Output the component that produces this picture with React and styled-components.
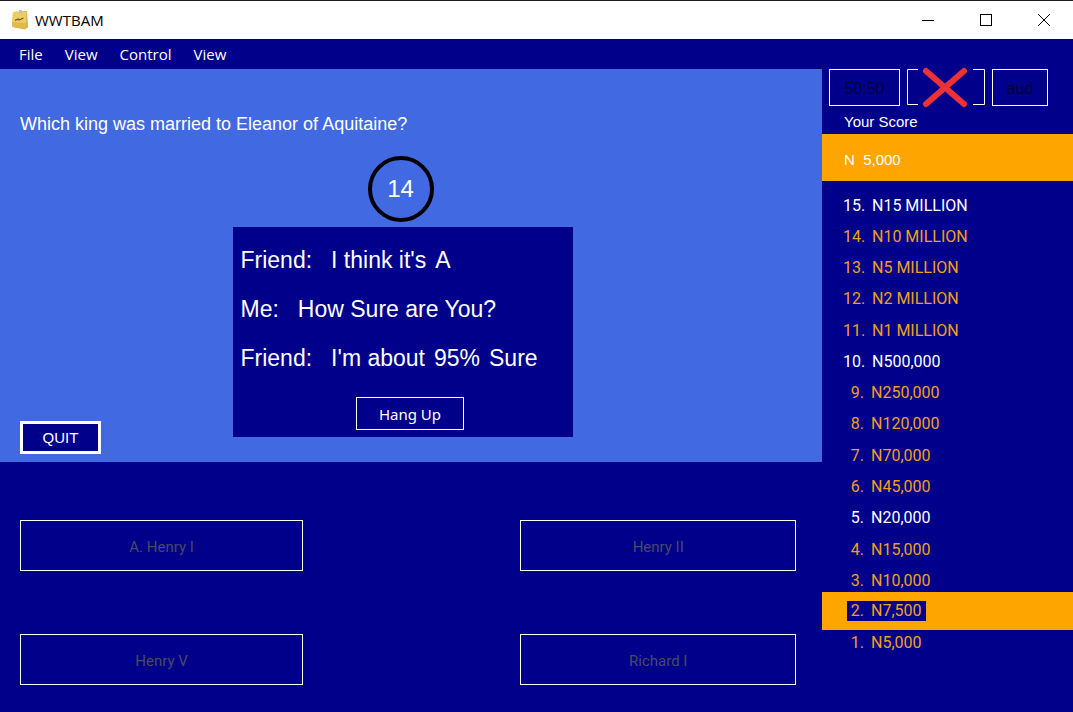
import React from "react";
import styled, { createGlobalStyle } from "styled-components";

const NAVY = "#00008b";
const ROYAL = "#4169e1";
const ORANGE = "#ffa500";

const GlobalStyle = createGlobalStyle`
  *, *::before, *::after { box-sizing: border-box; }
  body {
    margin: 0;
    background: ${NAVY};
    color: #fff;
    font-family: "Liberation Sans", Arial, sans-serif;
    font-size: 15px;
  }
  button { font: inherit; margin: 0; padding: 0; }
`;

const Window = styled.div`
  display: flex;
  flex-direction: column;
  min-height: 100vh;
`;

const TitleBar = styled.header`
  display: flex;
  align-items: center;
  height: 39px;
  padding-left: 11px;
  background: #fff;
  color: #000;
  border-top: 1px solid #231f20;
`;

const Title = styled.h1`
  flex: 1;
  margin: 0 0 0 6px;
  font: 400 15px/20px "Open Sans", "Noto Sans", sans-serif;
`;

const WindowButton = styled.button`
  display: grid;
  place-items: center;
  width: 58px;
  height: 38px;
  border: 0;
  background: none;
  color: #000;
`;

const Body = styled.div`
  display: flex;
  flex: 1;
`;

const Stage = styled.main`
  display: flex;
  flex: 1;
  flex-direction: column;
`;

const MenuBar = styled.nav`
  display: flex;
  gap: 22px;
  height: 30px;
  padding-left: 19px;
`;

const MenuItem = styled.button`
  border: 0;
  background: none;
  color: #fff;
  font: 400 15px/30px "Open Sans", "Noto Sans", sans-serif;
`;

const QuestionPanel = styled.section`
  position: relative;
  display: flex;
  flex-direction: column;
  align-items: center;
  height: 393px;
  padding: 45px 37px 0 20px;
  background: ${ROYAL};
`;

const Question = styled.h2`
  align-self: flex-start;
  margin: 0 0 22px;
  font-size: 18px;
  font-weight: 400;
  line-height: 20px;
`;

const Timer = styled.div`
  display: grid;
  place-items: center;
  width: 66px;
  height: 66px;
  margin: 0 4px 5px 0;
  border: 4px solid #000;
  border-radius: 50%;
  font-size: 24px;
`;

const CallDialog = styled.div`
  display: flex;
  flex-direction: column;
  width: 340px;
  height: 210px;
  padding: 19px 8px 7px;
  background: ${NAVY};
`;

const CallLine = styled.p`
  display: flex;
  margin: 0 0 21px;
  font-size: 23px;
  line-height: 28px;
`;

const Speaker = styled.span`
  margin-right: 19px;
`;

const Value = styled.span`
  margin: 0 9px;
`;

const OutlineButton = styled.button`
  border: ${(p) => (p.$thick ? 3 : 1)}px solid #fff;
  background: ${NAVY};
  color: #fff;
`;

const HangUpButton = styled(OutlineButton)`
  align-self: center;
  width: 108px;
  height: 33px;
  margin-left: 15px;
  margin-top: auto;
  font-family: "Noto Sans", "Open Sans", sans-serif;
`;

const QuitButton = styled(OutlineButton)`
  position: absolute;
  left: 20px;
  bottom: 8px;
  width: 81px;
  height: 33px;
`;

const Answers = styled.section`
  display: grid;
  grid-template-columns: 37fr 36fr;
  grid-auto-rows: 51px;
  gap: 63px 28%;
  padding: 58px 26px 27px 20px;
`;

const Answer = styled(OutlineButton)`
  padding-top: 2px;
  font-family: Roboto, "Liberation Sans", sans-serif;
  color: #4a4a62;
`;

const ScorePanel = styled.aside`
  display: flex;
  flex-direction: column;
  width: 251px;
  padding: 30px 0 53px;
`;

const Lifelines = styled.div`
  display: flex;
  gap: 7px;
  padding-left: 7px;
`;

const Lifeline = styled(OutlineButton)`
  width: ${(p) => p.$width}px;
  height: 37px;
  padding-top: 2px;
  color: #00003c;
  font-size: 16px;
`;

const UsedLifeline = styled.button`
  width: 78px;
  height: 37px;
  border: 0;
  background: none;
  svg { display: block; overflow: visible; }
`;

const ScoreLabel = styled.h2`
  margin: 6px 0 2px 22px;
  font-size: 15px;
  font-weight: 400;
  line-height: 20px;
`;

const Score = styled.div`
  height: 47px;
  padding-left: 22px;
  background: ${ORANGE};
  line-height: 52px;
  white-space: pre;
`;

const Ladder = styled.ol`
  display: grid;
  flex: 1;
  grid-template-rows: repeat(15, 1fr);
  margin: 9px 0 0;
  padding: 0;
  list-style: none;
  font: 400 16px/20px Roboto, "Liberation Sans", sans-serif;
`;

const Rung = styled.li`
  display: flex;
  align-items: center;
  margin: ${(p) => (p.$current ? "-4px 0 -2px" : 0)};
  padding-left: ${(p) => (p.$wide ? 21 : 25)}px;
  background: ${(p) => (p.$current ? ORANGE : "none")};
  color: ${(p) => (p.$safe ? "#fff" : "#f0a01c")};
`;

const RungText = styled.span`
  display: flex;
  padding-right: 4px;
  background: ${NAVY};
`;

const RungNumber = styled.span`
  width: ${(p) => (p.$wide ? 22 : 17)}px;
  margin-right: 7px;
  text-align: right;
`;

const STEPS = [
  [15, "N15 MILLION"], [14, "N10 MILLION"], [13, "N5 MILLION"],
  [12, "N2 MILLION"], [11, "N1 MILLION"], [10, "N500,000"],
  [9, "N250,000"], [8, "N120,000"], [7, "N70,000"], [6, "N45,000"],
  [5, "N20,000"], [4, "N15,000"], [3, "N10,000"], [2, "N7,500"], [1, "N5,000"],
];

function AppIcon() {
  return (
    <svg width="18" height="20" viewBox="0 0 18 20" aria-hidden="true">
      <path d="M2 2L16 1L17 17L14 19.500L1 17Z" fill="#cfae4c" />
      <path d="M2 2L15.500 1.500L15 18.500L1 16.500Z" fill="#efcd62" />
      <path d="M1.300 12L15.300 13L15 18.500L1 16.500Z" fill="#e2b94a" />
      <path d="M4 10.500L7 9L8 10L12.500 8" fill="none" stroke="#6b5a2a" strokeWidth="1.300" />
      <path d="M8 0H11V3.500H8Z" fill="#b9c4c9" />
    </svg>
  );
}

export default function App() {
  return (
    <>
      <GlobalStyle />
      <Window>
        <TitleBar>
          <AppIcon />
          <Title>WWTBAM</Title>
          <WindowButton aria-label="Minimize">
            <svg width="12" height="12" shapeRendering="crispEdges"><path d="M0 6.5H12" stroke="#000" /></svg>
          </WindowButton>
          <WindowButton aria-label="Maximize">
            <svg width="12" height="12" shapeRendering="crispEdges"><rect x=".5" y=".5" width="11" height="11" fill="none" stroke="#000" /></svg>
          </WindowButton>
          <WindowButton aria-label="Close">
            <svg width="12" height="12"><path d="M0 0L12 12M12 0L0 12" stroke="#000" /></svg>
          </WindowButton>
        </TitleBar>
        <Body>
          <Stage>
            <MenuBar>
              {["File", "View", "Control", "View"].map((m, i) => <MenuItem key={i}>{m}</MenuItem>)}
            </MenuBar>
            <QuestionPanel>
              <Question>Which king was married to Eleanor of Aquitaine?</Question>
              <Timer>14</Timer>
              <CallDialog role="dialog" aria-label="Phone a friend">
                <CallLine><Speaker>Friend:</Speaker>I think it's<Value>A</Value></CallLine>
                <CallLine><Speaker>Me:</Speaker>How Sure are You?</CallLine>
                <CallLine><Speaker>Friend:</Speaker>I'm about<Value>95%</Value>Sure</CallLine>
                <HangUpButton>Hang Up</HangUpButton>
              </CallDialog>
              <QuitButton $thick>QUIT</QuitButton>
            </QuestionPanel>
            <Answers>
              {["A. Henry I", "Henry II", "Henry V", "Richard I"].map((a) => <Answer key={a} disabled>{a}</Answer>)}
            </Answers>
          </Stage>
          <ScorePanel>
            <Lifelines>
              <Lifeline $width={71} disabled>50:50</Lifeline>
              <UsedLifeline aria-label="Phone a friend, used" disabled>
                <svg width="78" height="37" fill="none">
                  <path d="M11 .5H.5V35.5H11M66 .5H77.5V35.5H66" stroke="#fff" />
                  <path d="M19 2L57 35M57 2L19 35" stroke="#ed3237" strokeWidth="6" strokeLinecap="round" />
                </svg>
              </UsedLifeline>
              <Lifeline $width={56} disabled>aud</Lifeline>
            </Lifelines>
            <ScoreLabel>Your Score</ScoreLabel>
            <Score>{"N  5,000"}</Score>
            <Ladder>
              {STEPS.map(([n, prize]) => (
                <Rung key={n} $safe={n % 5 === 0} $current={n === 2} $wide={n > 9}>
                  <RungText><RungNumber $wide={n > 9}>{n}.</RungNumber>{prize}</RungText>
                </Rung>
              ))}
            </Ladder>
          </ScorePanel>
        </Body>
      </Window>
    </>
  );
}
